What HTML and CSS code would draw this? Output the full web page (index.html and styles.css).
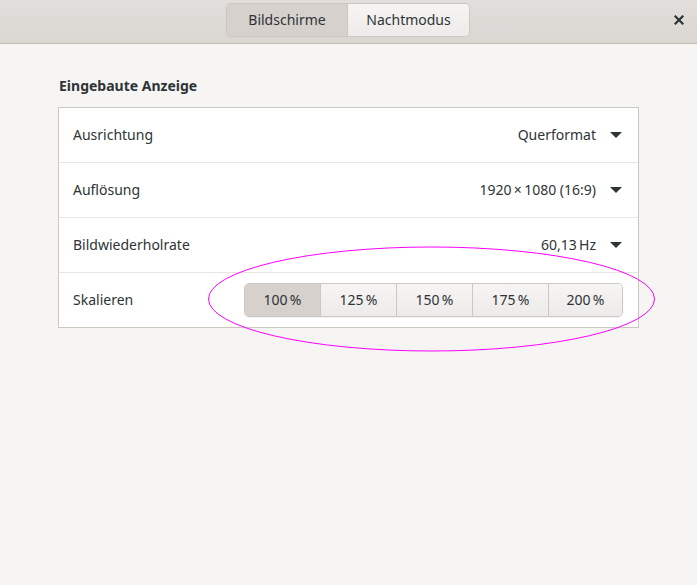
FILE: index.html
```html
<!DOCTYPE html>
<html lang="de">
<head>
<meta charset="utf-8">
<link rel="stylesheet" href="styles.css">
</head>
<body>
<div class="window">
  <header class="headerbar">
    <div class="switcher">
      <button class="sw-btn active">Bildschirme</button>
      <button class="sw-btn">Nachtmodus</button>
    </div>
    <button class="close" aria-label="Schließen">
      <svg width="10" height="10" viewBox="0 0 10 10"><path d="M1.5 1.5 L8.5 8.5 M8.5 1.5 L1.5 8.5" stroke="#2e3436" stroke-width="2.2" stroke-linecap="square"/></svg>
    </button>
  </header>
  <main class="content">
    <h2 class="section-title">Eingebaute Anzeige</h2>
    <div class="frame">
      <div class="row">
        <span class="label">Ausrichtung</span>
        <span class="value">Querformat<span class="arrow"></span></span>
      </div>
      <div class="row">
        <span class="label">Auflösung</span>
        <span class="value">1920&#8201;×&#8201;1080 (16:9)<span class="arrow"></span></span>
      </div>
      <div class="row">
        <span class="label">Bildwiederholrate</span>
        <span class="value">60,13&#8239;Hz<span class="arrow"></span></span>
      </div>
      <div class="row">
        <span class="label">Skalieren</span>
        <div class="scales">
          <button class="scale active">100&#8239;%</button>
          <button class="scale">125&#8239;%</button>
          <button class="scale">150&#8239;%</button>
          <button class="scale">175&#8239;%</button>
          <button class="scale">200&#8239;%</button>
        </div>
      </div>
    </div>
  </main>
  <svg class="annotation" width="697" height="585" viewBox="0 0 697 585"><ellipse cx="431.5" cy="299" rx="223" ry="52" fill="none" stroke="#ff00ff" stroke-width="1"/></svg>
</div>
</body>
</html>
```

FILE: styles.css
```css
* { box-sizing: border-box; }
html, body { margin: 0; padding: 0; }
body {
  width: 697px;
  height: 585px;
  overflow: hidden;
  background: #f6f5f4;
  font-family: "Noto Sans", "DejaVu Sans", sans-serif;
  font-size: 14px;
  color: #2e3436;
}
.window { position: relative; width: 697px; height: 585px; }
.headerbar {
  height: 44px;
  background: linear-gradient(#e1dedb, #dad6d2);
  border-bottom: 1px solid #c0b9b2;
  display: flex;
  justify-content: center;
  align-items: flex-start;
  padding-top: 3px;
  position: relative;
}
.switcher {
  display: flex;
  border: 1px solid #cdc7c2;
  border-radius: 5px;
  overflow: hidden;
  height: 34px;
  margin-left: -1px;
}
.sw-btn {
  width: 121px;
  border: none;
  font: inherit;
  font-size: 14px;
  color: #2e3436;
  background: linear-gradient(#f6f5f4, #edebe9);
  padding: 0 0 2px 0;
}
.sw-btn.active { background: #d6d1cd; border-right: 1px solid #cdc7c2; }
.close {
  position: absolute;
  right: 13px;
  top: 15px;
  width: 10px;
  height: 10px;
  padding: 0;
  border: none;
  background: none;
  display: block;
}
.close svg { display: block; }
.content { padding: 32px 58px 0 58px; width: 639px; }
.section-title {
  margin: 0 0 11px 1px;
  font-size: 14px;
  font-weight: bold;
  line-height: 20px;
}
.frame {
  width: 581px;
  background: #ffffff;
  border: 1px solid #cdc7c2;
}
.row {
  height: 55px;
  display: flex;
  align-items: center;
  justify-content: space-between;
  padding: 0 16px 2px 14px;
  border-top: 1px solid #e8e5e2;
}
.row:first-child { border-top: none; height: 54px; }
.value { display: flex; align-items: center; }
.arrow {
  width: 0; height: 0;
  border-left: 6px solid transparent;
  border-right: 6px solid transparent;
  border-top: 6px solid #2e3436;
  margin-left: 14px;
  margin-top: 2px;
}
.scales {
  display: flex;
  border: 1px solid #cdc7c2;
  border-radius: 5px;
  overflow: hidden;
  height: 34px;
  margin-right: -1px;
  margin-top: 2px;
  box-shadow: 0 1px 1px rgba(0,0,0,0.05);
}
.scale {
  width: 76px;
  border: none;
  border-left: 1px solid #cdc7c2;
  font: inherit;
  font-size: 14px;
  color: #2e3436;
  background: linear-gradient(#f6f5f4, #edebe9);
  padding: 0 0 2px 0;
}
.scale:first-child { border-left: none; width: 75px; }
.scale:last-child { width: 74px; }
.scale.active { background: #d6d1cd; }
.annotation { position: absolute; left: 0; top: 0; pointer-events: none; }
```
